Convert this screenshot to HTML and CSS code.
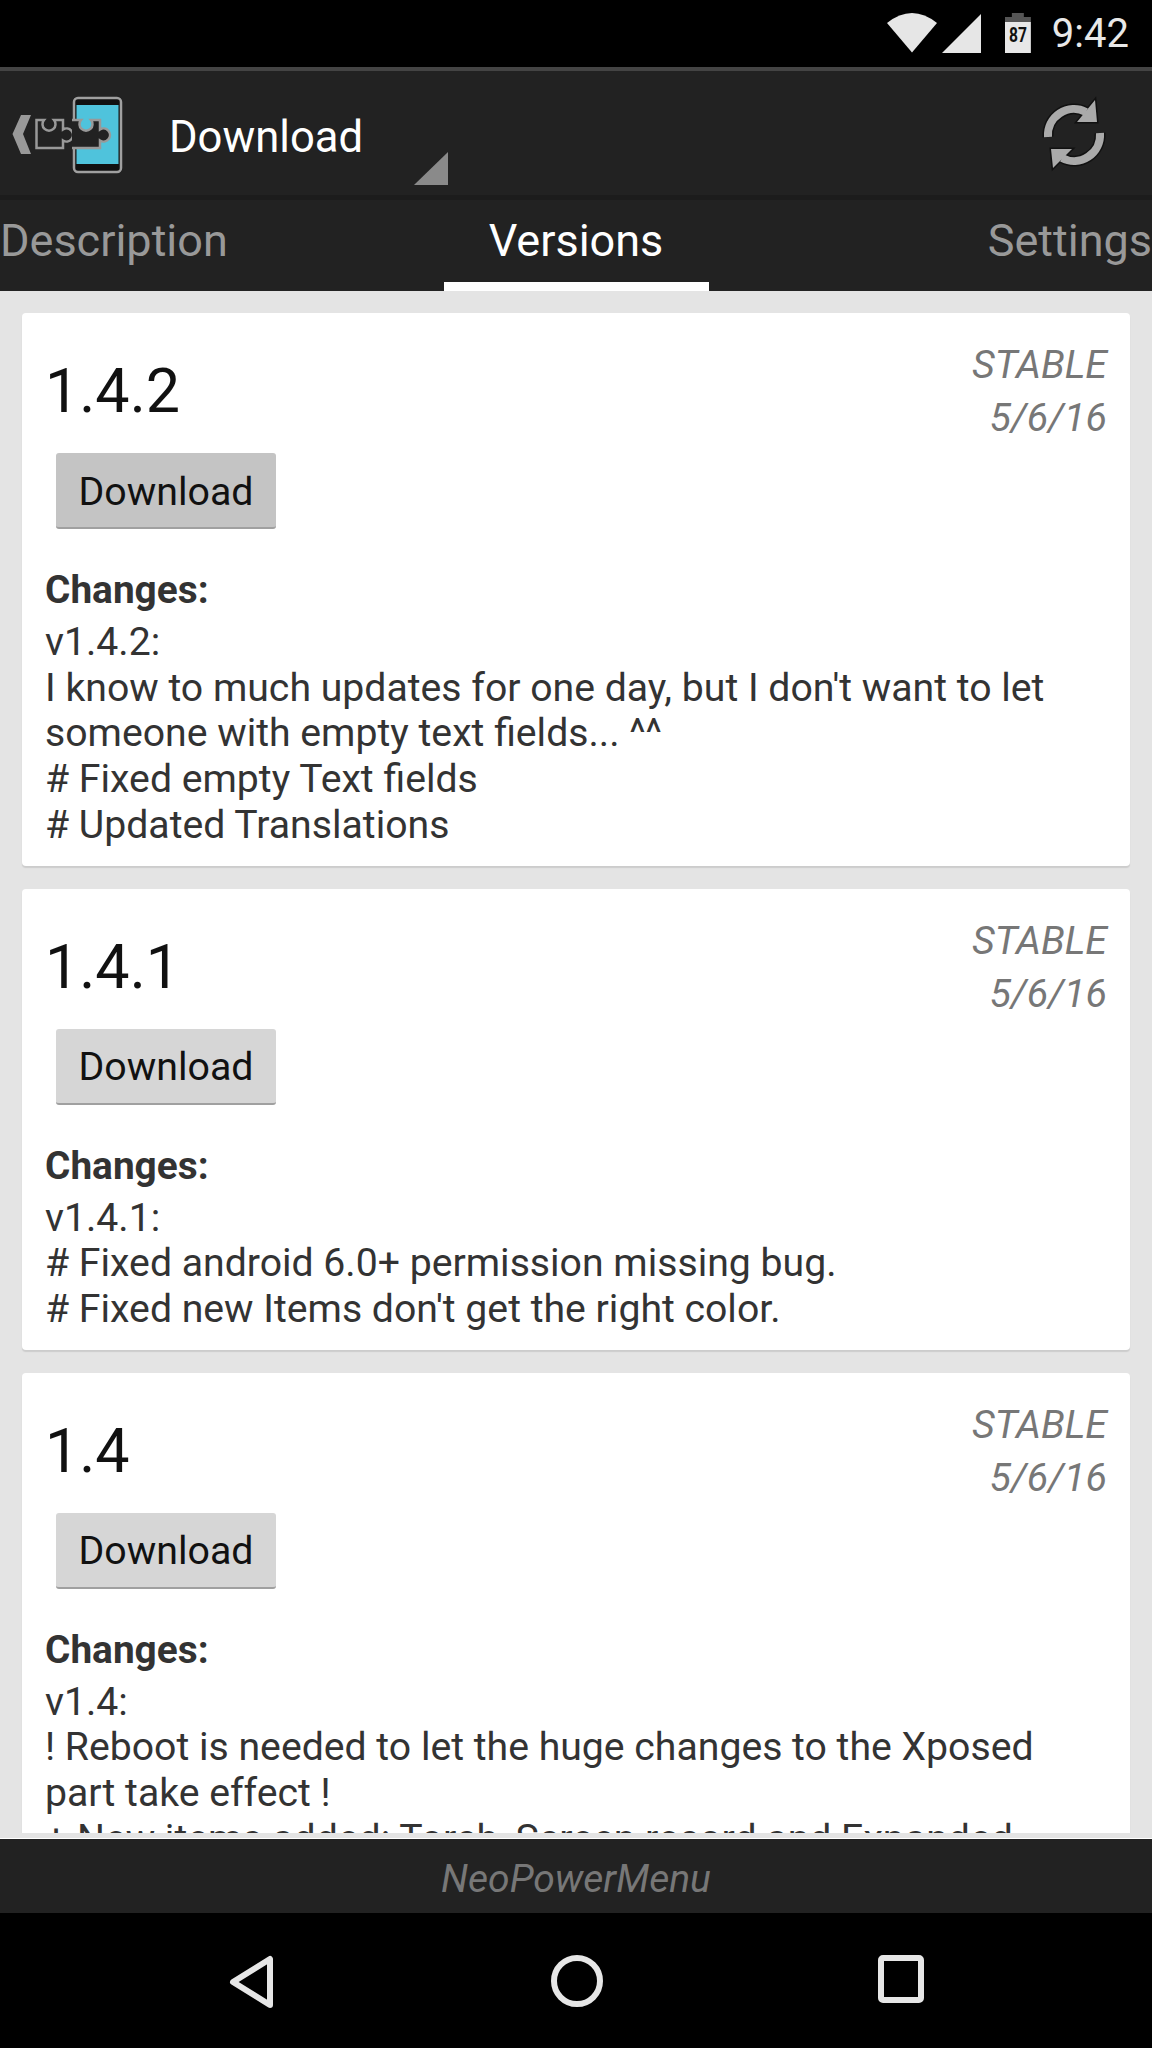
FILE: index.html
```html
<!DOCTYPE html>
<html lang="en">
<head>
    <meta charset="UTF-8">
    <meta name="viewport" content="width=device-width, initial-scale=1.0">
    <title>Download - NeoPowerMenu</title>
    <link rel="stylesheet" href="styles.css">
</head>
<body>
    <div class="status-bar">
        <svg width="50" height="40" viewBox="0 0 50 40"><path d="M0 10 Q25 -10 50 10 L25 39.5 Z" fill="#e6e6e6"/></svg>
        <svg class="signal" width="39" height="39" viewBox="0 0 39 39"><path d="M0 39 L39 0 V39 Z" fill="#e6e6e6"/></svg>
        <div class="battery"><span class="battery-level">87</span></div>
        <span class="clock">9:42</span>
    </div>

    <header class="toolbar">
        <svg class="app-logo" width="140" height="100" viewBox="0 85 140 100">
            <path d="M21 115 H31 L23 134 L31 154 H21 L12.5 134 Z" fill="#999"/>
            <rect x="74" y="98" width="47" height="74" rx="4" fill="#111" stroke="#a0a0a0" stroke-width="2.5"/>
            <rect x="76.5" y="105" width="42" height="59" fill="#4fc3dc"/>
            <path d="M36.5 120 H44 A6.5 6.5 0 1 0 54 120 H63 V129.5 A6.5 6.5 0 1 1 63 140.5 V148 H36.5 Z" fill="#222" stroke="#999" stroke-width="2.5"/>
            <path d="M72 120 H81 A6.5 6.5 0 1 0 91 120 H100 V129.5 A6.5 6.5 0 1 1 100 140.5 V148 H72" fill="#222" stroke="#999" stroke-width="2.5"/>
        </svg>
        <span class="toolbar-title">Download</span>
        <svg class="spinner-corner" width="34" height="33" viewBox="0 0 34 33"><path d="M0 33 L34 0 V33 Z" fill="#8a8a8a"/></svg>
        <svg class="refresh" width="70" height="76" viewBox="1040 96 70 76">
            <path d="M1048 137 A26 26 0 0 1 1086 112 M1100 133 A26 26 0 0 1 1062 158" fill="none" stroke="#111" stroke-width="11"/>
            <path d="M1095 100 L1097 122 L1077 122 Z M1053 168 L1051 149 L1072 149 Z" fill="#aaa" stroke="#111" stroke-width="3" paint-order="stroke"/>
            <path d="M1048 137 A26 26 0 0 1 1086 112 M1100 133 A26 26 0 0 1 1062 158" fill="none" stroke="#aaa" stroke-width="8"/>
        </svg>
    </header>

    <nav class="tabs">
        <a href="#" class="tab tab-left">Description</a>
        <a href="#" class="tab tab-active">Versions</a>
        <a href="#" class="tab tab-right">Settings</a>
    </nav>

    <main class="content">
        <section class="card">
            <div class="card-head">
                <h2 class="version">1.4.2</h2>
                <div class="meta">STABLE<br>5/6/16</div>
            </div>
            <button class="download pressed">Download</button>
            <h3 class="changes-title">Changes:</h3>
            <p class="changes">v1.4.2:<br>I know to much updates for one day, but I don't want to let someone with empty text fields... ^^<br># Fixed empty Text fields<br># Updated Translations</p>
        </section>

        <section class="card">
            <div class="card-head">
                <h2 class="version">1.4.1</h2>
                <div class="meta">STABLE<br>5/6/16</div>
            </div>
            <button class="download">Download</button>
            <h3 class="changes-title">Changes:</h3>
            <p class="changes">v1.4.1:<br># Fixed android 6.0+ permission missing bug.<br># Fixed new Items don't get the right color.</p>
        </section>

        <section class="card">
            <div class="card-head">
                <h2 class="version">1.4</h2>
                <div class="meta">STABLE<br>5/6/16</div>
            </div>
            <button class="download">Download</button>
            <h3 class="changes-title">Changes:</h3>
            <p class="changes">v1.4:<br>! Reboot is needed to let the huge changes to the Xposed part take effect !<br>+ New items added: Torch, Screen record and Expanded</p>
        </section>
    </main>

    <div class="module-name">NeoPowerMenu</div>

    <div class="nav-bar">
        <svg width="46" height="54" viewBox="0 0 46 54"><path d="M41 4 V50 L4 27 Z" fill="none" stroke="#e6e6e6" stroke-width="6" stroke-linejoin="round"/></svg>
        <svg width="52" height="52" viewBox="0 0 52 52"><circle cx="26" cy="26" r="23" fill="none" stroke="#e6e6e6" stroke-width="6"/></svg>
        <svg width="46" height="48" viewBox="0 0 46 48"><rect x="3" y="3" width="40" height="42" rx="2" fill="none" stroke="#e6e6e6" stroke-width="6"/></svg>
    </div>
</body>
</html>
```

FILE: styles.css
```css
* {
    margin: 0;
    padding: 0;
    box-sizing: border-box;
    font-family: Roboto, sans-serif;
}

html, body {
    width: 1152px;
    height: 2048px;
    overflow: hidden;
}

body {
    display: flex;
    flex-direction: column;
    background-color: #000;
}

.status-bar {
    height: 67px;
    flex-shrink: 0;
    display: flex;
    align-items: flex-start;
    justify-content: flex-end;
    padding: 13px 23px 0 0;
    background-color: #000;
}

.signal {
    margin-left: 5px;
    margin-top: 1px;
}

.battery {
    width: 26px;
    height: 40px;
    margin-left: 24px;
    padding-top: 12px;
    background: linear-gradient(#555 0, #555 9px, #e8e8e8 9px);
    clip-path: polygon(27% 0, 73% 0, 73% 10%, 100% 10%, 100% 100%, 0 100%, 0 10%, 27% 10%);
    text-align: center;
}

.battery-level {
    display: block;
    font-size: 20px;
    line-height: 20px;
    font-weight: 700;
    color: #111;
    transform: scaleX(0.78);
}

.clock {
    margin-left: 21px;
    margin-top: -2px;
    font-size: 40px;
    line-height: 46px;
    color: #e8e8e8;
}

.toolbar {
    position: relative;
    height: 133px;
    flex-shrink: 0;
    display: flex;
    align-items: center;
    background-color: #222;
    border-top: 4px solid #444;
    border-bottom: 5px solid #1c1c1c;
}

.app-logo {
    margin-top: 4px;
}

.toolbar-title {
    margin-left: 29px;
    margin-top: 8px;
    font-size: 43.6px;
    color: #fff;
}

.spinner-corner {
    position: absolute;
    left: 414px;
    top: 81px;
}

.refresh {
    position: absolute;
    left: 1040px;
    top: 25px;
}

.tabs {
    height: 91px;
    flex-shrink: 0;
    display: grid;
    grid-template-columns: 1fr 265px 1fr;
    background-color: #222;
}

.tab {
    font-size: 45px;
    line-height: 82px;
    color: #999;
    text-decoration: none;
    white-space: nowrap;
}

.tab-right {
    justify-self: end;
}

.tab-active {
    text-align: center;
    color: #fff;
    border-bottom: 9px solid #fff;
}

.content {
    flex: 1;
    min-height: 0;
    overflow: hidden;
    display: flex;
    flex-direction: column;
    gap: 23px;
    padding: 22px 22px 0;
    background-color: #e4e4e4;
    border-bottom: 5px solid #e4e4e4;
}

.card {
    flex-shrink: 0;
    padding: 28px 23px 17px;
    background-color: #fff;
    border-radius: 4px;
    box-shadow: 0 2px 1px #ccc;
}

.card-head {
    display: flex;
    justify-content: space-between;
    height: 112px;
}

.version {
    margin-top: 15px;
    font-size: 61px;
    line-height: 70px;
    font-weight: 400;
    color: #111;
}

.meta {
    margin-top: -3px;
    font-size: 39.4px;
    line-height: 53px;
    font-style: italic;
    text-align: right;
    color: #777;
}

.download {
    display: block;
    width: 220px;
    height: 76px;
    margin-left: 11px;
    padding-top: 3px;
    font-size: 39.3px;
    color: #111;
    background-color: #d6d6d6;
    border: none;
    border-bottom: 2px solid #a0a0a0;
    border-radius: 3px;
}

.download.pressed {
    background-color: #c4c4c4;
}

.changes-title {
    margin-top: 38px;
    font-size: 38.8px;
    line-height: 46px;
    font-weight: 700;
    color: #333;
}

.changes {
    margin-top: 7px;
    font-size: 39.2px;
    line-height: 45.7px;
    color: #333;
}

.module-name {
    height: 75px;
    flex-shrink: 0;
    padding-top: 3px;
    font-size: 39px;
    line-height: 75px;
    font-style: italic;
    text-align: center;
    color: #777;
    background-color: #222;
    border-top: 1px solid #fff;
}

.nav-bar {
    height: 135px;
    flex-shrink: 0;
    display: flex;
    justify-content: space-between;
    align-items: flex-start;
    padding: 42px 228px 0 229px;
    background-color: #000;
}
```
